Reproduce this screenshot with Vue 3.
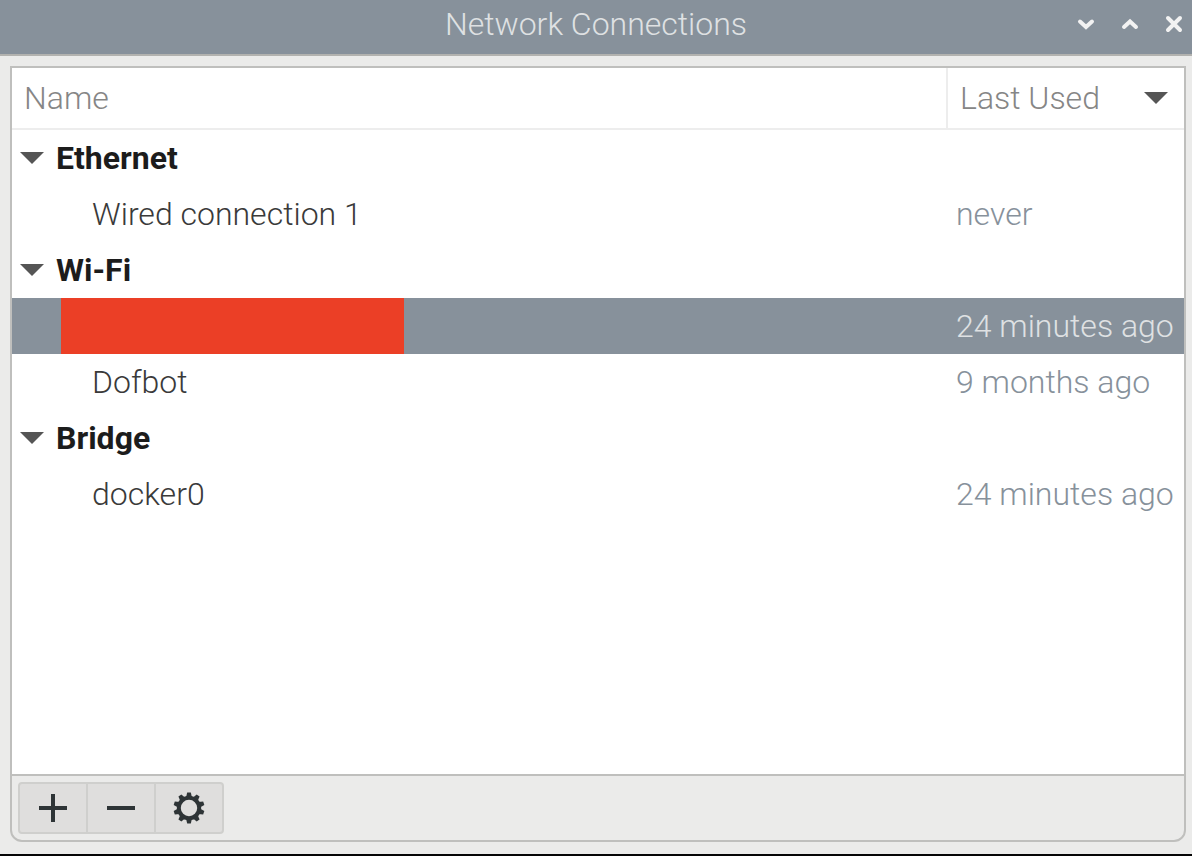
<script setup>
import { ref } from 'vue'

const groups = [
  { name: 'Ethernet', items: [{ name: 'Wired connection 1', used: 'never' }] },
  {
    name: 'Wi-Fi',
    items: [
      { name: '', used: '24 minutes ago', redacted: true },
      { name: 'Dofbot', used: '9 months ago' },
    ],
  },
  { name: 'Bridge', items: [{ name: 'docker0', used: '24 minutes ago' }] },
]
const selected = ref('Wi-Fi-0')
const closed = ref({})
</script>

<template>
  <div class="window">
    <header class="titlebar">
      <h1>Network Connections</h1>
      <div class="controls">
        <button type="button" aria-label="Minimize">
          <svg viewBox="0 0 20 20"><path d="M4 7.5 L10 13 L16 7.5" /></svg>
        </button>
        <button type="button" aria-label="Maximize">
          <svg viewBox="0 0 20 20"><path d="M4 13 L10 7.5 L16 13" /></svg>
        </button>
        <button type="button" aria-label="Close">
          <svg viewBox="0 0 20 20"><path d="M4 4 L16 16 M16 4 L4 16" /></svg>
        </button>
      </div>
    </header>

    <main class="frame">
      <div class="list">
        <table>
          <colgroup>
            <col />
            <col class="used-col" />
          </colgroup>
          <thead>
            <tr>
              <th scope="col"><button type="button" class="head">Name</button></th>
              <th scope="col" aria-sort="descending">
                <button type="button" class="head">
                  Last Used
                  <svg class="arrow" viewBox="0 0 24 12"><path d="M0 0H24L12 12Z" /></svg>
                </button>
              </th>
            </tr>
          </thead>
          <tbody v-for="g in groups" :key="g.name">
            <tr>
              <td colspan="2">
                <button
                  type="button"
                  class="group"
                  :aria-expanded="!closed[g.name]"
                  @click="closed[g.name] = !closed[g.name]"
                >
                  <svg class="arrow" :class="{ shut: closed[g.name] }" viewBox="0 0 24 12"><path d="M0 0H24L12 12Z" /></svg>
                  {{ g.name }}
                </button>
              </td>
            </tr>
            <template v-if="!closed[g.name]">
              <tr
                v-for="(item, i) in g.items"
                :key="i"
                :class="{ selected: selected === g.name + '-' + i }"
                @click="selected = g.name + '-' + i"
              >
                <td class="name" :class="{ hidden: item.redacted }">
                  <div v-if="item.redacted" class="redaction"></div>
                  <template v-else>{{ item.name }}</template>
                </td>
                <td class="used">{{ item.used }}</td>
              </tr>
            </template>
          </tbody>
        </table>
      </div>
      <footer class="toolbar">
        <div class="tools">
          <button type="button" aria-label="Add">
            <svg viewBox="0 0 32 32"><path class="line" d="M2 16H30M16 2V30" /></svg>
          </button>
          <button type="button" aria-label="Remove">
            <svg viewBox="0 0 32 32"><path class="line" d="M2 16H30" /></svg>
          </button>
          <button type="button" aria-label="Settings">
            <svg viewBox="0 0 32 32">
              <circle class="line" cx="16" cy="16" r="10.2" />
              <g v-for="n in 10" :key="n" :transform="`rotate(${n * 36} 16 16)`">
                <path d="M13 5.5 L14.2 0.5 H17.8 L19 5.5Z" />
              </g>
            </svg>
          </button>
        </div>
      </footer>
    </main>
  </div>
</template>

<style>
body {
  margin: 0;
}
</style>

<style scoped>
.window {
  box-sizing: border-box;
  min-height: 100vh;
  display: flex;
  flex-direction: column;
  background: #ebebea;
  border-bottom: 2px solid #050505;
  font-family: Roboto, "Liberation Sans", sans-serif;
  font-size: 32px;
  font-weight: 300;
  line-height: 40px;
  color: #3a3a3a;
}
button {
  margin: 0;
  padding: 0;
  border: 0;
  background: none;
  font: inherit;
  color: inherit;
}
svg {
  display: block;
}
.titlebar {
  box-sizing: border-box;
  height: 56px;
  display: grid;
  grid-template-columns: 1fr auto 1fr;
  align-items: center;
  padding: 0 8px 6px;
  background: #87919b;
  border-bottom: 2px solid #b2b2af;
  color: #dfe1e3;
}
.titlebar h1 {
  grid-column: 2;
  margin: 0;
  font: inherit;
}
.controls {
  display: flex;
  justify-content: flex-end;
  gap: 24px;
}
.controls svg {
  width: 20px;
  height: 20px;
  fill: none;
  stroke: #f2f2f2;
  stroke-width: 4;
  stroke-linecap: round;
}
.frame {
  flex: 1;
  display: flex;
  flex-direction: column;
  margin: 10px 6px 12px 10px;
  border: 2px solid #bfbfbd;
  border-radius: 0 0 12px 12px;
}
.list {
  flex: 1;
  background: #fff;
}
table {
  width: 100%;
  table-layout: fixed;
  border-collapse: separate;
  border-spacing: 0;
}
.used-col {
  width: 238px;
}
th {
  padding: 0;
  border-bottom: 2px solid #ededed;
  font-weight: inherit;
  color: #868686;
}
th + th {
  border-left: 2px solid #ededed;
}
.head {
  width: 100%;
  height: 60px;
  display: flex;
  align-items: center;
  justify-content: space-between;
  padding: 0 16px 0 12px;
}
.arrow {
  width: 24px;
  height: 12px;
  fill: #555;
}
.shut {
  transform: rotate(-90deg);
}
td {
  height: 56px;
  padding: 0;
  white-space: nowrap;
}
.group {
  display: flex;
  align-items: center;
  gap: 12px;
  padding-left: 8px;
  font-weight: 700;
  color: #1c1c1c;
}
.name {
  padding-left: 80px;
}
.hidden {
  padding-left: 49px;
}
.redaction {
  width: 343px;
  height: 56px;
  background: #eb3f26;
}
.used {
  padding-left: 10px;
  color: #87919b;
}
.selected {
  background: #87919b;
}
.selected .used {
  color: #dfe1e3;
}
.toolbar {
  border-top: 2px solid #bfbfbd;
  padding: 6px;
}
.tools {
  width: max-content;
  display: flex;
  border: 2px solid #cfcfcd;
  border-radius: 4px;
  background: #dfdedd;
}
.tools button {
  box-sizing: content-box;
  width: 66px;
  height: 48px;
  display: grid;
  place-items: center;
}
.tools button + button {
  border-left: 2px solid #cfcfcd;
}
.tools svg {
  width: 32px;
  height: 32px;
  fill: #2e3436;
}
.tools .line {
  fill: none;
  stroke: #2e3436;
  stroke-width: 4;
}
</style>
